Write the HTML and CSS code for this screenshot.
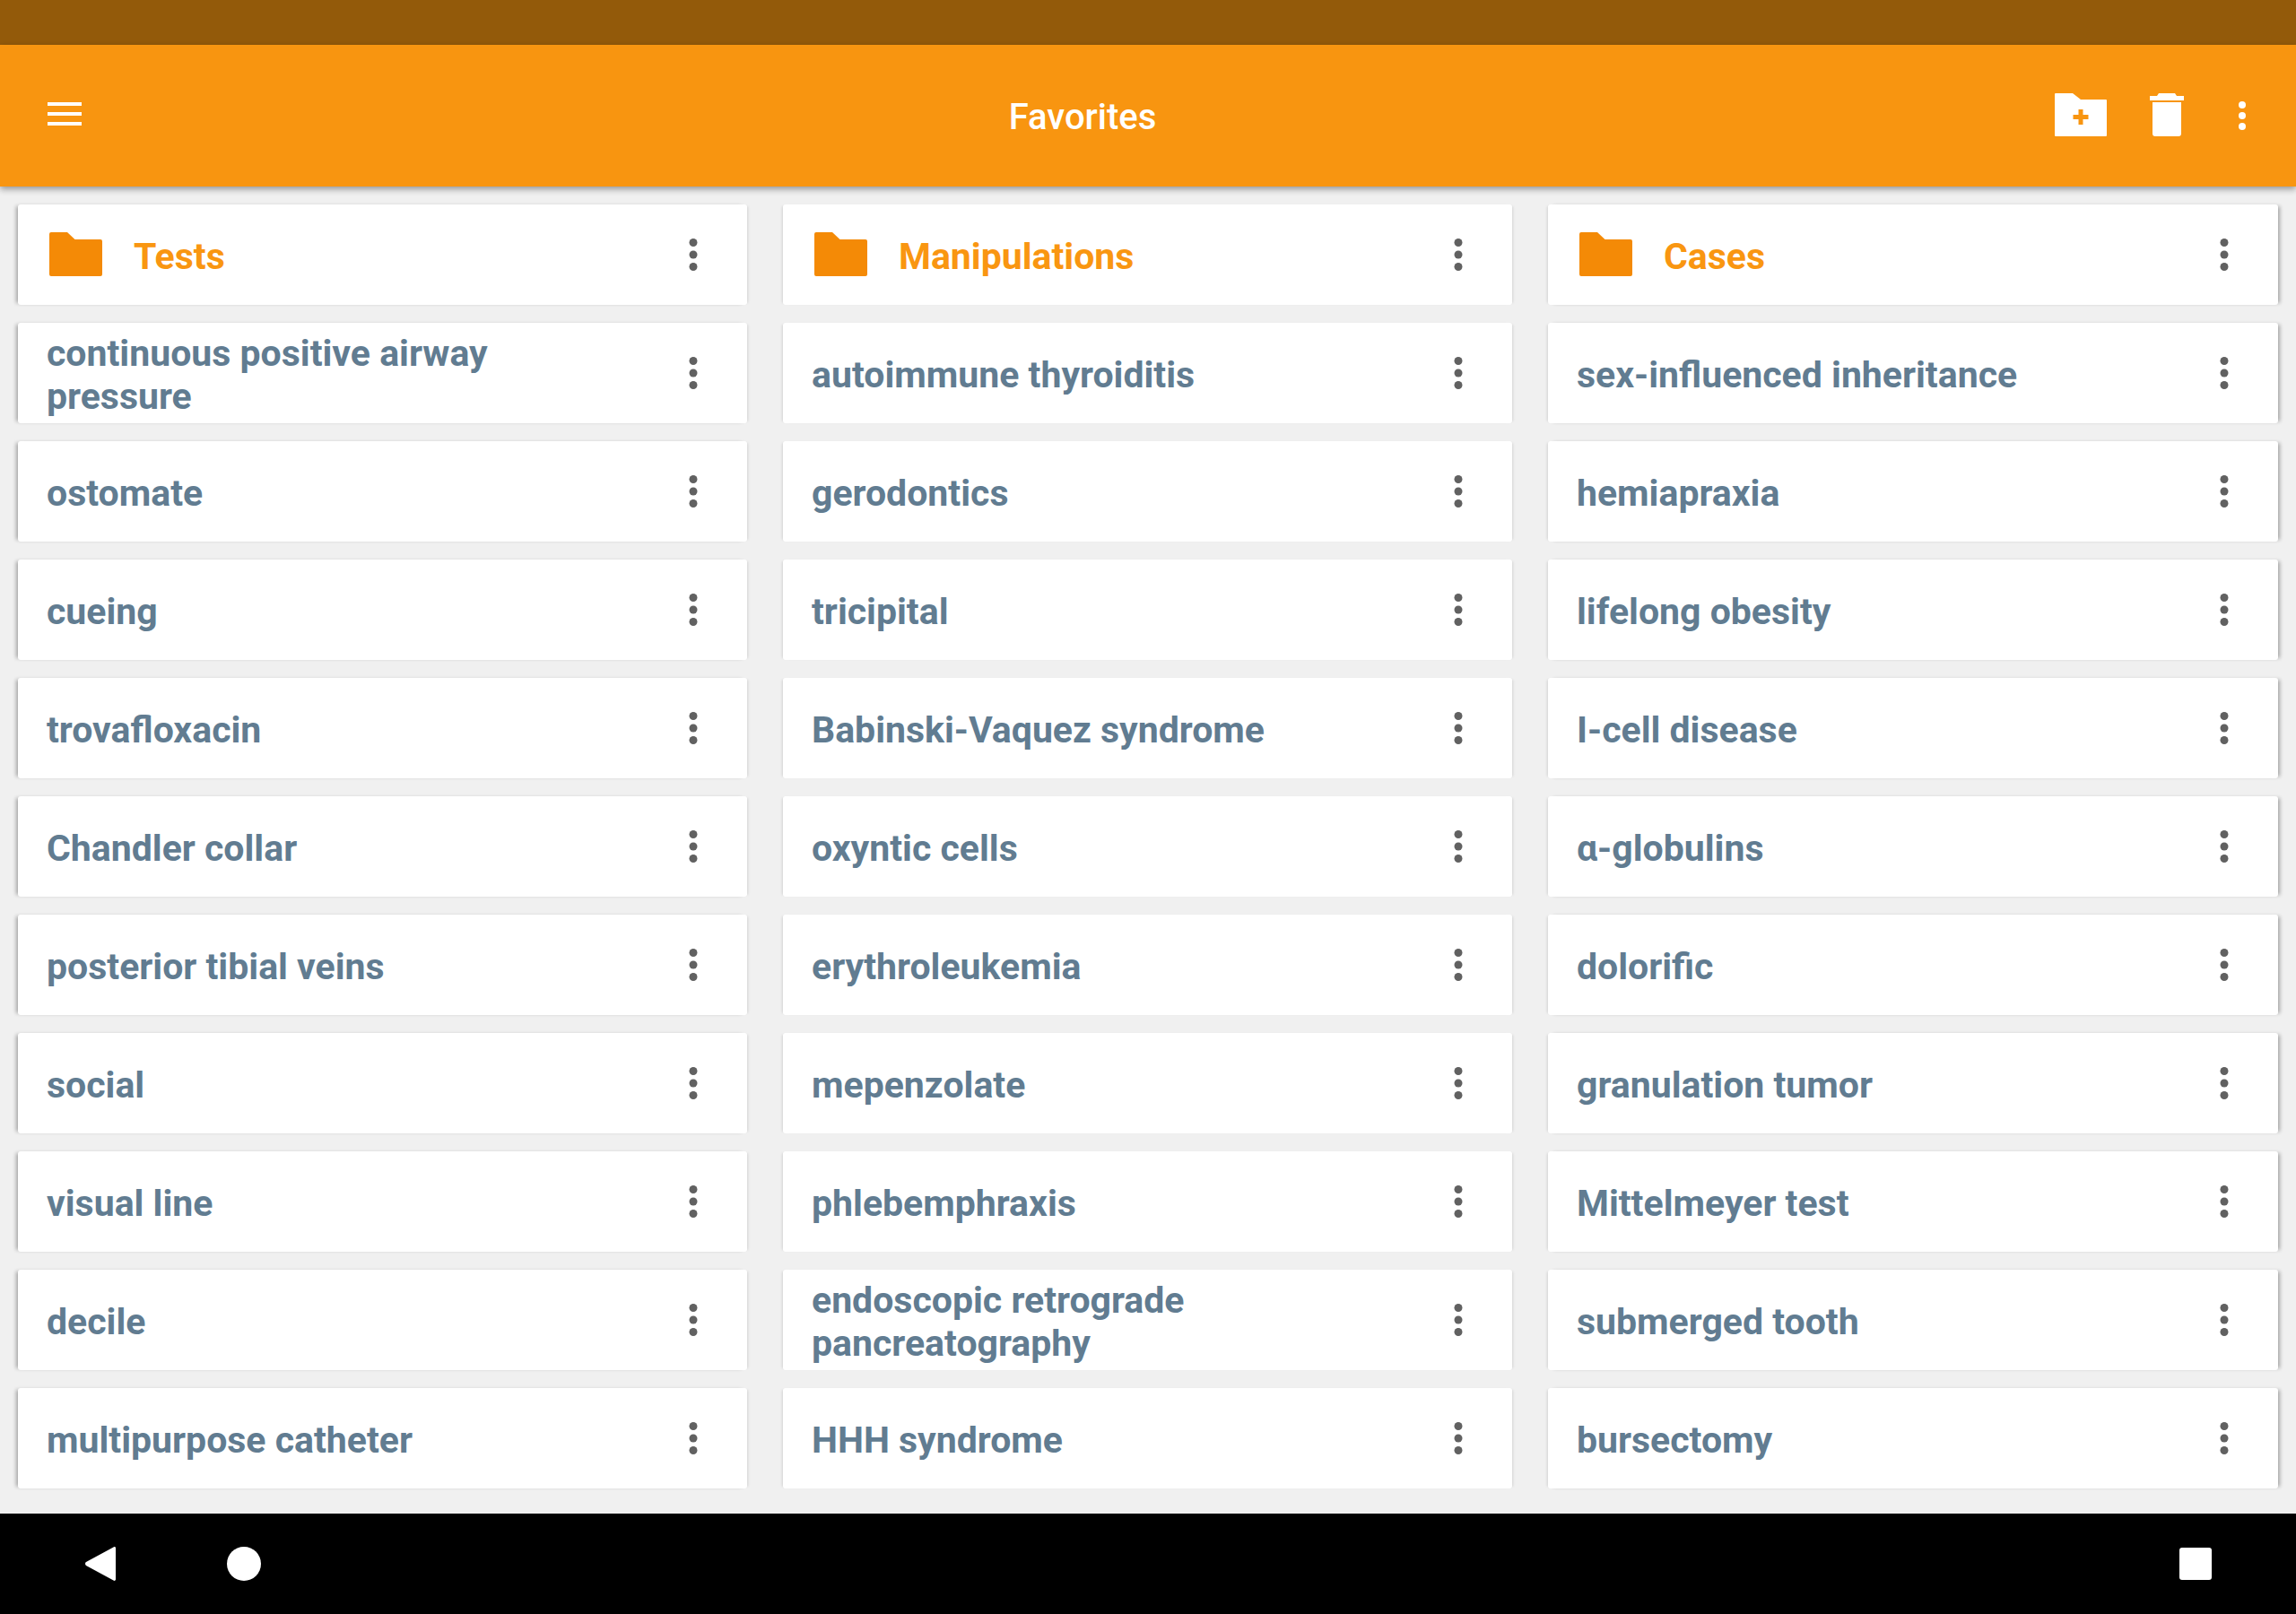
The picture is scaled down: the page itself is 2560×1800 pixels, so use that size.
FILE: index.html
```html
<!DOCTYPE html>
<html lang="en">
<head>
<meta charset="utf-8">
<title>Favorites</title>
<link rel="stylesheet" href="styles.css">
</head>
<body>
<svg class="defs" width="0" height="0" aria-hidden="true">
  <symbol id="dots" viewBox="0 0 10 38"><circle cx="5" cy="5.500" r="4.500"/><circle cx="5" cy="19" r="4.500"/><circle cx="5" cy="32.500" r="4.500"/></symbol>
  <symbol id="folder" viewBox="0 0 59 49"><path d="M2 0H20L28.500 8H57a2 2 0 0 1 2 2V47a2 2 0 0 1-2 2H2a2 2 0 0 1-2-2V2a2 2 0 0 1 2-2z"/></symbol>
</svg>
<div class="status"></div>
<header class="appbar">
  <svg class="menu" viewBox="0 0 38 26"><path d="M0 0h38v4H0zM0 11h38v4H0zM0 22h38v4H0z"/></svg>
  <h1 class="title">Favorites</h1>
  <svg class="add" viewBox="0 0 58 48"><path fill-rule="evenodd" d="M1 0H20L29 7H57a1 1 0 0 1 1 1V47a1 1 0 0 1-1 1H1a1 1 0 0 1-1-1V1a1 1 0 0 1 1-1zM26.500 18v6h-6v5h6v6h5v-6h6v-5h-6v-6z"/></svg>
  <svg class="trash" viewBox="0 0 38 48"><path d="M10 0h18l2 3h8v5H0V3h8zM3 10h32v35a3 3 0 0 1-3 3H6a3 3 0 0 1-3-3z"/></svg>
  <svg class="more" viewBox="0 0 8 32"><circle cx="4" cy="4" r="4"/><circle cx="4" cy="16" r="4"/><circle cx="4" cy="28" r="4"/></svg>
</header>
<main class="grid">
  <div class="card head"><svg class="fold"><use href="#folder"/></svg><span class="label">Tests</span><svg class="dots"><use href="#dots"/></svg></div>
  <div class="card head"><svg class="fold"><use href="#folder"/></svg><span class="label">Manipulations</span><svg class="dots"><use href="#dots"/></svg></div>
  <div class="card head"><svg class="fold"><use href="#folder"/></svg><span class="label">Cases</span><svg class="dots"><use href="#dots"/></svg></div>

  <div class="card"><span class="term">continuous positive airway pressure</span><svg class="dots"><use href="#dots"/></svg></div>
  <div class="card"><span class="term">autoimmune thyroiditis</span><svg class="dots"><use href="#dots"/></svg></div>
  <div class="card"><span class="term">sex-influenced inheritance</span><svg class="dots"><use href="#dots"/></svg></div>

  <div class="card"><span class="term">ostomate</span><svg class="dots"><use href="#dots"/></svg></div>
  <div class="card"><span class="term">gerodontics</span><svg class="dots"><use href="#dots"/></svg></div>
  <div class="card"><span class="term">hemiapraxia</span><svg class="dots"><use href="#dots"/></svg></div>

  <div class="card"><span class="term">cueing</span><svg class="dots"><use href="#dots"/></svg></div>
  <div class="card"><span class="term">tricipital</span><svg class="dots"><use href="#dots"/></svg></div>
  <div class="card"><span class="term">lifelong obesity</span><svg class="dots"><use href="#dots"/></svg></div>

  <div class="card"><span class="term">trovafloxacin</span><svg class="dots"><use href="#dots"/></svg></div>
  <div class="card"><span class="term">Babinski-Vaquez syndrome</span><svg class="dots"><use href="#dots"/></svg></div>
  <div class="card"><span class="term">I-cell disease</span><svg class="dots"><use href="#dots"/></svg></div>

  <div class="card"><span class="term">Chandler collar</span><svg class="dots"><use href="#dots"/></svg></div>
  <div class="card"><span class="term">oxyntic cells</span><svg class="dots"><use href="#dots"/></svg></div>
  <div class="card"><span class="term">α-globulins</span><svg class="dots"><use href="#dots"/></svg></div>

  <div class="card"><span class="term">posterior tibial veins</span><svg class="dots"><use href="#dots"/></svg></div>
  <div class="card"><span class="term">erythroleukemia</span><svg class="dots"><use href="#dots"/></svg></div>
  <div class="card"><span class="term">dolorific</span><svg class="dots"><use href="#dots"/></svg></div>

  <div class="card"><span class="term">social</span><svg class="dots"><use href="#dots"/></svg></div>
  <div class="card"><span class="term">mepenzolate</span><svg class="dots"><use href="#dots"/></svg></div>
  <div class="card"><span class="term">granulation tumor</span><svg class="dots"><use href="#dots"/></svg></div>

  <div class="card"><span class="term">visual line</span><svg class="dots"><use href="#dots"/></svg></div>
  <div class="card"><span class="term">phlebemphraxis</span><svg class="dots"><use href="#dots"/></svg></div>
  <div class="card"><span class="term">Mittelmeyer test</span><svg class="dots"><use href="#dots"/></svg></div>

  <div class="card"><span class="term">decile</span><svg class="dots"><use href="#dots"/></svg></div>
  <div class="card"><span class="term">endoscopic retrograde pancreatography</span><svg class="dots"><use href="#dots"/></svg></div>
  <div class="card"><span class="term">submerged tooth</span><svg class="dots"><use href="#dots"/></svg></div>

  <div class="card"><span class="term">multipurpose catheter</span><svg class="dots"><use href="#dots"/></svg></div>
  <div class="card"><span class="term">HHH syndrome</span><svg class="dots"><use href="#dots"/></svg></div>
  <div class="card"><span class="term">bursectomy</span><svg class="dots"><use href="#dots"/></svg></div>
</main>
<footer class="nav">
  <svg class="back" viewBox="0 0 34 38"><path d="M33 0a1.500 1.500 0 0 1 1 1.500V36.500a1.500 1.500 0 0 1-2.500 1L1 21a2.500 2.500 0 0 1 0-4L31.500.5A1.500 1.500 0 0 1 33 0z"/></svg>
  <svg class="home" viewBox="0 0 38 38"><circle cx="19" cy="19" r="19"/></svg>
  <span class="square"></span>
</footer>
</body>
</html>
```

FILE: styles.css
```css
* { box-sizing: border-box; }
html, body { margin: 0; padding: 0; }
body {
  width: 2560px;
  height: 1800px;
  display: flex;
  flex-direction: column;
  background: #f0f0f0;
  font-family: Roboto, "Liberation Sans", sans-serif;
  overflow: hidden;
}
.defs { position: absolute; }
.status { height: 50px; background: #935a0a; flex: none; }
.appbar {
  height: 158px;
  flex: none;
  display: flex;
  align-items: center;
  background: #f89510;
  color: #fff;
  fill: #fff;
  padding: 0 56px 0 53px;
  box-shadow: 0 3px 7px rgba(0, 0, 0, .38);
  position: relative;
  z-index: 1;
}
.menu { width: 38px; height: 26px; flex: none; margin-top: -4px; }
.title {
  flex: 1;
  margin: 2px 0 0;
  text-align: center;
  font-size: 40px;
  font-weight: 500;
  padding-left: 32px;
}
.add { width: 58px; height: 48px; flex: none; margin-top: -2px; }
.trash { width: 38px; height: 48px; flex: none; margin: -2px 0 0 48px; }
.more { width: 8px; height: 32px; flex: none; margin: -1px 0 0 61px; }
.grid {
  flex: 1;
  display: grid;
  grid-template-columns: 813px 813px 814px;
  grid-auto-rows: 112px;
  gap: 20px 40px;
  padding: 20px;
  align-content: start;
}
.card {
  display: flex;
  align-items: center;
  background: #fff;
  border-radius: 3px;
  padding: 0 55px 0 32px;
  box-shadow: -3px 0 3px -2px rgba(0, 0, 0, .12), 3px 0 3px -2px rgba(0, 0, 0, .12);
}
.card:nth-child(3n+1) {
  box-shadow: -4px 0 4px -2px rgba(0, 0, 0, .32), 3px 0 3px -2px rgba(0, 0, 0, .12);
}
.card:nth-child(3n) {
  box-shadow: -3px 0 3px -2px rgba(0, 0, 0, .12), 4px 0 4px -2px rgba(0, 0, 0, .32);
}
.head { padding-left: 35px; }
.fold { width: 59px; height: 49px; fill: #f48a06; flex: none; margin: -2px 35px 0 0; }
.label { flex: 1; font-size: 41px; font-weight: 700; color: #f99611; margin-top: 3px; }
.term {
  flex: 1;
  font-size: 41px;
  line-height: 48px;
  font-weight: 700;
  color: #617c91;
  padding-right: 100px;
  margin-top: 3px;
}
.dots { width: 10px; height: 38px; fill: #616161; flex: none; }
.nav {
  height: 112px;
  flex: none;
  display: flex;
  align-items: center;
  background: #000;
  fill: #fff;
  padding: 0 94px 0 95px;
}
.back { width: 34px; height: 38px; flex: none; }
.home { width: 38px; height: 38px; flex: none; margin-left: 124px; }
.square { width: 36px; height: 36px; background: #fff; border-radius: 3px; margin-left: auto; flex: none; }
```
